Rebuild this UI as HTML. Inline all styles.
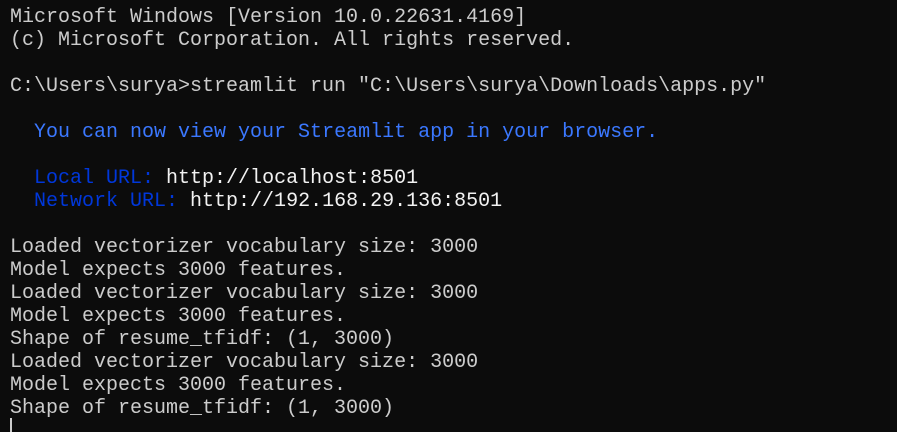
<!DOCTYPE html>
<html><head><style>
html,body{margin:0;padding:0;background:#0c0c0c;width:897px;height:432px;overflow:hidden}
pre{margin:0;position:absolute;left:10px;top:6px;font-family:"Liberation Mono",monospace;font-size:20px;line-height:23px;color:#cccccc}
.b{color:#3b78ff}.d{color:#0037da}.w{color:#f2f2f2}
.cur{position:absolute;left:10px;top:418px;width:2px;height:14px;background:#cccccc}
</style></head><body>
<pre>Microsoft Windows [Version 10.0.22631.4169]
(c) Microsoft Corporation. All rights reserved.

C:\Users\surya&gt;streamlit run "C:\Users\surya\Downloads\apps.py"

  <span class="b">You can now view your Streamlit app in your browser.</span>

  <span class="d">Local URL: </span><span class="w">http://localhost:8501</span>
  <span class="d">Network URL: </span><span class="w">http://192.168.29.136:8501</span>

Loaded vectorizer vocabulary size: 3000
Model expects 3000 features.
Loaded vectorizer vocabulary size: 3000
Model expects 3000 features.
Shape of resume_tfidf: (1, 3000)
Loaded vectorizer vocabulary size: 3000
Model expects 3000 features.
Shape of resume_tfidf: (1, 3000)</pre>
<div class="cur"></div>
</body></html>
